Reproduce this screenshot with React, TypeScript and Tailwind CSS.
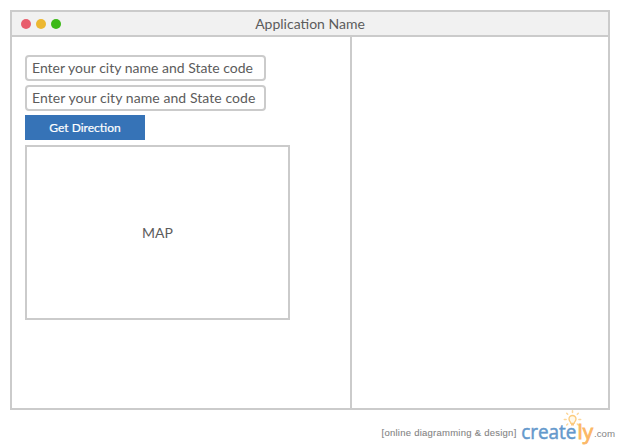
const inputClass =
  "flex h-[26px] w-[241px] items-center rounded-[4px] border-2 border-[#cbcbcb] bg-white pl-[5px] text-[14px] leading-none whitespace-nowrap";

function CityField({ spacing }: { spacing: string }) {
  return (
    <div className={inputClass}>
      <span className={spacing}>Enter your city name and State code</span>
    </div>
  );
}

function CreatelyLogo() {
  return (
    <svg width="98" height="40" viewBox="520 408 98 40" className="block">
      <g stroke="#fcd79a" strokeWidth="1.5" strokeLinecap="round">
        <path d="M572.5 410.8v1.7M566.7 413.2l1 1M578.3 413.2l-1 1M564.3 419.5h1.8M578.9 419.5h1.8M566.7 425l1-1M578.3 425l-1-1" />
      </g>
      <path
        d="M570.9 423.3c0-1.4-1.9-2.3-1.9-4.3a3.5 3.5 0 0 1 7 0c0 2-1.9 2.9-1.9 4.3z"
        fill="#fff9ea"
        stroke="#fccb7c"
        strokeWidth="1.3"
      />
      <path d="M571 424.8h3" stroke="#f8bd6a" strokeWidth="1.3" />
      <g fontFamily="'Open Sans', sans-serif" fontSize="20.5" fontWeight="500">
        <text
          x="521.2"
          y="438.7"
          fill="#6499cc"
          stroke="#6499cc"
          strokeWidth="0.5"
          textLength="55.3"
          lengthAdjust="spacingAndGlyphs"
        >
          create
        </text>
        <text
          x="577.5"
          y="438.7"
          fill="#fbb765"
          stroke="#fbb765"
          strokeWidth="0.9"
          textLength="15.5"
          lengthAdjust="spacingAndGlyphs"
        >
          ly
        </text>
      </g>
      <text
        x="594"
        y="437"
        fill="#858585"
        fontFamily="'Liberation Sans', Arial, sans-serif"
        fontSize="9"
        textLength="21"
        lengthAdjust="spacingAndGlyphs"
      >
        .com
      </text>
    </svg>
  );
}

export default function App() {
  return (
    <div className="flex h-[448px] w-[620px] flex-col bg-white pt-[10px] pl-[10px] font-['Lato',sans-serif] text-[#5c5c5c]">
      <main className="flex h-[400px] w-[600px] shrink-0 flex-col border-2 border-[#cbcbcb]">
        <header className="grid h-[25px] shrink-0 grid-cols-[1fr_auto_1fr] items-center border-b-2 border-[#cbcbcb] bg-[#f1f1f1]">
          <div className="flex gap-[5px] pl-[9px]">
            <span className="size-[10px] rounded-full bg-[#e85d6c]" />
            <span className="size-[10px] rounded-full bg-[#ecb731]" />
            <span className="size-[10px] rounded-full bg-[#3cb917]" />
          </div>
          <h1 className="text-[14px] leading-none">Application Name</h1>
        </header>
        <div className="flex flex-1">
          <section className="flex w-[340px] flex-col items-start border-r-2 border-[#cbcbcb] pt-[18px] pl-[13px]">
            <CityField spacing="" />
            <div className="mt-1">
              <CityField spacing="tracking-[0.07px]" />
            </div>
            <button className="mt-1 h-[25px] w-[120px] bg-[#3673b7] text-[12px] leading-none text-white [-webkit-text-stroke:0.2px_white]">
              Get Direction
            </button>
            <div className="mt-[5px] flex h-[175px] w-[265px] items-center justify-center border-2 border-[#cbcbcb] text-[14px]">
              MAP
            </div>
          </section>
          <section className="flex-1" />
        </div>
      </main>
      <footer className="flex h-[38px] items-start pl-[371.5px]">
        <span className="mt-[17px] w-[138.5px] shrink-0 font-['Liberation_Sans',sans-serif] text-[9.5px] leading-3 tracking-[0.25px] whitespace-nowrap text-[#858585] [-webkit-text-stroke:0.1px_#858585]">
          [online diagramming &amp; design]
        </span>
        <div className="-mt-[2px] shrink-0">
          <CreatelyLogo />
        </div>
      </footer>
    </div>
  );
}
